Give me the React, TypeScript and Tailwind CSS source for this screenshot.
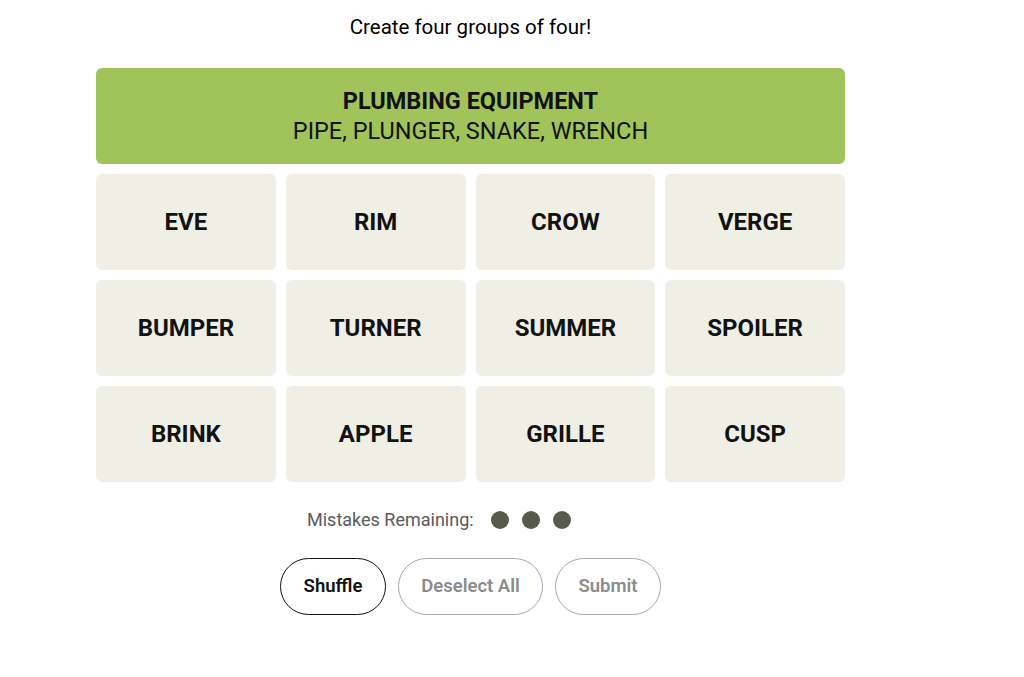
import React from "react";

const rows = [
  ["EVE", "RIM", "CROW", "VERGE"],
  ["BUMPER", "TURNER", "SUMMER", "SPOILER"],
  ["BRINK", "APPLE", "GRILLE", "CUSP"],
];

export default function App() {
  return (
    <div
      className="min-h-[677px] w-[1024px] bg-white text-[#121212]"
      style={{ fontFamily: "Roboto, 'Liberation Sans', sans-serif" }}
    >
      <div className="ml-[96px] flex w-[749px] flex-col items-center">
        <div className="mt-[15px] h-[24px] text-[20.5px] leading-[24px] text-black">
          Create four groups of four!
        </div>
        <div className="mt-[29px] flex h-[96px] w-full flex-col items-center justify-center rounded-[6px] bg-[#a0c35a]">
          <div className="text-[23.5px] font-bold leading-[30px]">PLUMBING EQUIPMENT</div>
          <div className="text-[23.5px] leading-[30px]">PIPE, PLUNGER, SNAKE, WRENCH</div>
        </div>
        <div className="mt-[10px] grid w-full grid-cols-4 gap-x-[10px] gap-y-[10px]">
          {rows.flat().map((w) => (
            <div
              key={w}
              className="flex h-[96px] items-center justify-center rounded-[6px] bg-[#efefe6] text-[24px] font-bold"
            >
              {w}
            </div>
          ))}
        </div>
        <div className="mt-[26px] flex items-center self-start pl-[211px] text-[18px] leading-[24px] text-[#5a5a5a]">
          <span>Mistakes Remaining:</span>
          <div className="ml-[17px] flex gap-[13px]">
            <span className="h-[18px] w-[18px] rounded-full bg-[#5a594e]" />
            <span className="h-[18px] w-[18px] rounded-full bg-[#5a594e]" />
            <span className="h-[18px] w-[18px] rounded-full bg-[#5a594e]" />
          </div>
        </div>
        <div className="mt-[26px] flex gap-[12px]">
          <button className="h-[57px] w-[106px] rounded-full border border-[#121212] text-[18.5px] font-semibold text-[#121212]">
            Shuffle
          </button>
          <button className="h-[57px] w-[145px] rounded-full border border-[#a8a8a8] text-[18.5px] font-semibold text-[#8c8c8c]">
            Deselect All
          </button>
          <button className="h-[57px] w-[106px] rounded-full border border-[#a8a8a8] text-[18.5px] font-semibold text-[#8c8c8c]">
            Submit
          </button>
        </div>
      </div>
    </div>
  );
}
